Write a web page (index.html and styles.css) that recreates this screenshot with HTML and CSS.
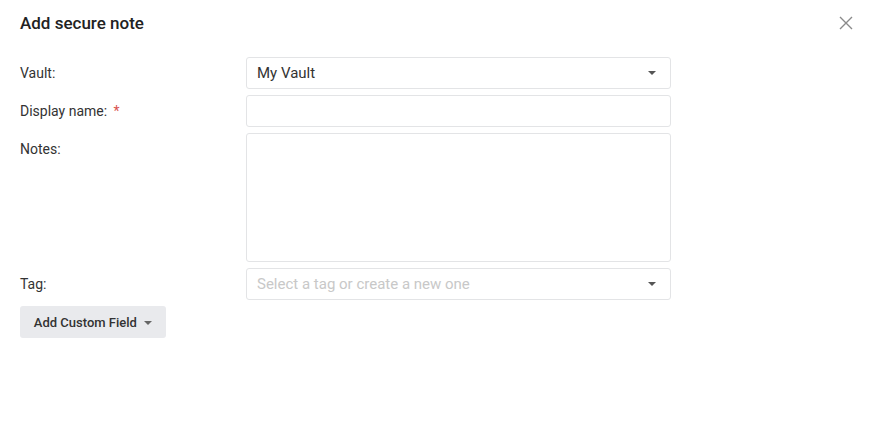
FILE: index.html
```html
<!DOCTYPE html>
<html lang="en">
    <head>
        <meta charset="UTF-8" />
        <meta name="viewport" content="width=device-width, initial-scale=1.0" />
        <title>Add secure note</title>
        <link rel="stylesheet" href="styles.css">
    </head>
    <body>
        <main class="dialog">
            <header class="dialog-head">
                <h1>Add secure note</h1>
                <button class="close" aria-label="Close">
                    <svg width="14" height="14" viewBox="0 0 14 14">
                        <path d="M1 1L13 13M13 1L1 13" stroke="#8a8a8a" stroke-width="1.4" fill="none" />
                    </svg>
                </button>
            </header>
            <div class="form">
                <label class="label">Vault:</label>
                <div class="field select">
                    <span class="value">My Vault</span>
                    <span class="caret"></span>
                </div>
                <label class="label">Display name: <span class="req">*</span></label>
                <div class="field"></div>
                <label class="label">Notes:</label>
                <div class="field notes"></div>
                <label class="label">Tag:</label>
                <div class="field select">
                    <span class="placeholder">Select a tag or create a new one</span>
                    <span class="caret"></span>
                </div>
            </div>
            <button class="custom-btn">Add Custom Field <span class="caret small"></span></button>
        </main>
    </body>
</html>
```

FILE: styles.css
```css
* {
    margin: 0;
    padding: 0;
    box-sizing: border-box;
}
body {
    font-family: Roboto, "Liberation Sans", sans-serif;
    background: #ffffff;
    color: #333;
}
.dialog {
    padding: 12px 20px 0;
}
.dialog-head {
    display: flex;
    justify-content: space-between;
    align-items: center;
    height: 22px;
}
h1 {
    font-size: 17px;
    font-weight: 500;
    color: #222;
}
.close {
    border: none;
    background: none;
    width: 14px;
    height: 14px;
    display: flex;
}
.form {
    display: grid;
    grid-template-columns: 226px 425px;
    row-gap: 6px;
    margin-top: 23px;
}
.label {
    font-size: 14px;
    color: #333;
    line-height: 32px;
}
.req {
    margin-left: 3px;
    color: #d9534f;
}
.field {
    height: 32px;
    border: 1px solid #e3e4e6;
    border-radius: 3px;
    display: flex;
    align-items: center;
    padding: 0 10px;
    font-size: 15px;
}
.field.notes {
    height: 129px;
}
.select {
    justify-content: space-between;
    padding-right: 14px;
}
.value {
    color: #333;
}
.placeholder {
    color: #c8c8c8;
}
.caret {
    width: 0;
    height: 0;
    border-left: 4px solid transparent;
    border-right: 4px solid transparent;
    border-top: 4px solid #555;
}
.caret.small {
    display: inline-block;
    vertical-align: middle;
    margin-left: 4px;
    border-top-color: #666;
}
.custom-btn {
    margin-top: 6px;
    width: 146px;
    height: 32px;
    border: none;
    border-radius: 3px;
    background: #e9eaed;
    font-family: inherit;
    font-size: 13px;
    font-weight: 500;
    color: #333;
}
```
